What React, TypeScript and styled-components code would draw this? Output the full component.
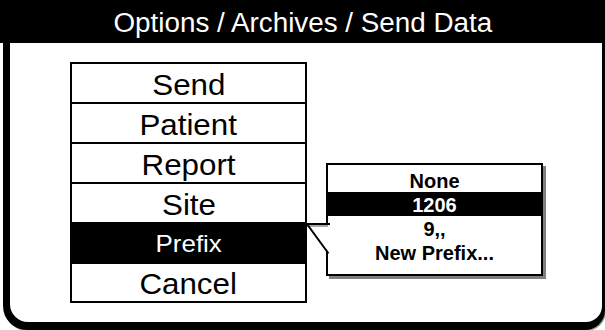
import React from "react";
import styled, { createGlobalStyle } from "styled-components";

const Global = createGlobalStyle`
  html, body { margin: 0; padding: 0; background: #fff; }
  body { font-family: "Liberation Sans", Arial, sans-serif; }
`;

const Screen = styled.div`
  width: 605px;
  height: 330px;
  display: flex;
  flex-direction: column;
  background: #fff;
  overflow: hidden;
`;

const Header = styled.div`
  height: 43px;
  flex: none;
  box-sizing: border-box;
  padding-top: 4px;
  background: #000;
  color: #fff;
  display: flex;
  align-items: center;
  justify-content: center;
  font-size: 27px;
  line-height: 1;
`;

const Stretch = styled.span<{ $sx: number }>`
  display: inline-block;
  transform: scaleX(${(p) => p.$sx});
  white-space: pre;
`;

const Frame = styled.div`
  flex: 1;
  margin-left: 3px;
  background: #000;
  padding: 0 3px 8px 7px;
  border-radius: 0 0 20px 24px;
  display: flex;
  box-shadow: 1px 1px 0 #9a9a9a;
`;

const Panel = styled.div`
  flex: 1;
  position: relative;
  background: #fff;
  border-radius: 0 0 16px 18px;
  padding: 19px 0 0 60px;
`;

const List = styled.div`
  width: 233px;
  border: 2px solid #000;
  display: flex;
  flex-direction: column;
`;

const Row = styled.div<{ $selected?: boolean; $last?: boolean }>`
  flex: none;
  height: ${(p) => (p.$last ? "37px" : "40px")};
  display: flex;
  align-items: center;
  justify-content: center;
  border-bottom: ${(p) => (p.$last ? "none" : "2px solid #000")};
  background: ${(p) => (p.$selected ? "#000" : "#fff")};
  color: ${(p) => (p.$selected ? "#fff" : "#000")};
  font-size: ${(p) => (p.$selected ? "24px" : "29px")};
  line-height: 1;
  padding-top: ${(p) => (p.$selected ? "1px" : "4px")};
  box-sizing: border-box;
`;

const Popup = styled.div`
  position: absolute;
  left: 316px;
  top: 120px;
  width: 213px;
  height: 106px;
  border: 2px solid #000;
  background: #fff;
  box-shadow: 3px 3px 0 #808080;
  padding-top: 3px;
  box-sizing: content-box;
  display: flex;
  flex-direction: column;
`;

const PopRow = styled.div<{ $selected?: boolean }>`
  height: 24px;
  display: flex;
  align-items: center;
  justify-content: center;
  background: ${(p) => (p.$selected ? "#000" : "#fff")};
  color: ${(p) => (p.$selected ? "#fff" : "#000")};
  font-weight: 700;
  font-size: 20px;
  line-height: 1;
  padding-top: 1px;
  box-sizing: border-box;
`;

const Tail = styled.svg`
  position: absolute;
  left: -22px;
  top: 56px;
  width: 26px;
  height: 36px;
  overflow: visible;
`;

const items = ["Send", "Patient", "Report", "Site", "Prefix", "Cancel"];
const prefixes = ["None", "1206", "9,,", "New Prefix..."];

export default function App() {
  return (
    <>
      <Global />
      <Screen>
        <Header>
          <Stretch $sx={1.03}>Options / Archives / Send Data</Stretch>
        </Header>
        <Frame>
          <Panel>
            <List>
              {items.map((t, i) => (
                <Row key={t} $selected={t === "Prefix"} $last={i === items.length - 1}>
                  <Stretch $sx={1.08}>{t}</Stretch>
                </Row>
              ))}
            </List>
            <Popup>
              {prefixes.map((p) => (
                <PopRow key={p} $selected={p === "1206"}>
                  <Stretch $sx={1.0}>{p}</Stretch>
                </PopRow>
              ))}
              <Tail viewBox="0 0 26 36">
                <polygon points="1,3 24,3 24,33" fill="#fff" />
                <line x1="1" y1="5" x2="22" y2="5" stroke="#8a8a8a" strokeWidth="1.5" />
                <polyline points="24,3 1,3 22.5,32.5" fill="none" stroke="#000" strokeWidth="2" />
              </Tail>
            </Popup>
          </Panel>
        </Frame>
      </Screen>
    </>
  );
}
